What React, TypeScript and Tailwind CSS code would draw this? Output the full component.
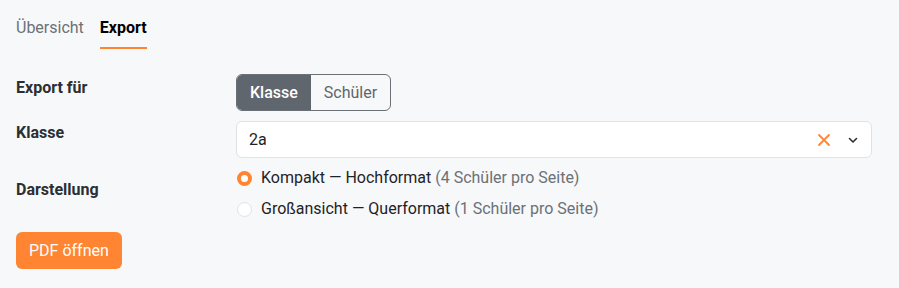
import { useState } from "react";

const fieldLabel = "text-[16px] leading-[20px] font-bold text-[#2b2f33]";

export default function App() {
  const [tab, setTab] = useState("export");
  const [target, setTarget] = useState("klasse");
  const [layout, setLayout] = useState("kompakt");

  return (
    <main className="min-h-screen bg-[#f7f8fa] px-4 font-['Roboto',sans-serif] text-[#2b2f33]">
      <div className="flex gap-4 pt-[14px]">
        <button
          onClick={() => setTab("overview")}
          className={`h-[35px] border-b-2 pb-[6px] text-[16px] ${tab === "overview" ? "border-[#ff8533] font-bold text-black" : "border-transparent text-[#6b7177]"}`}
        >
          Übersicht
        </button>
        <button
          onClick={() => setTab("export")}
          className={`h-[35px] border-b-2 pb-[6px] text-[16px] ${tab === "export" ? "border-[#ff8533] font-bold text-black" : "border-transparent text-[#6b7177]"}`}
        >
          Export
        </button>
      </div>

      <div className="mt-[25px] grid grid-cols-[220px_1fr] gap-y-[10px] pr-[11px]">
        <div className={`${fieldLabel} pt-[4px]`}>Export für</div>
        <div className="flex">
          <div className="flex h-[37px] overflow-hidden rounded-md border border-[#6b7177] text-[16px]">
            <button
              onClick={() => setTarget("klasse")}
              className={`px-[13px] ${target === "klasse" ? "bg-[#5f666e] font-medium text-white" : "text-[#5f666e]"}`}
            >
              Klasse
            </button>
            <button
              onClick={() => setTarget("schueler")}
              className={`px-[13px] ${target === "schueler" ? "bg-[#5f666e] font-medium text-white" : "text-[#5f666e]"}`}
            >
              Schüler
            </button>
          </div>
        </div>

        <div className={`${fieldLabel} pt-[2px]`}>Klasse</div>
        <div className="flex h-[37px] items-center rounded-md border border-[#dfe2e6] bg-white pl-[12px] pr-[12px] text-[16px] text-[#1f2327]">
          <span className="flex-1">2a</span>
          <svg width="14" height="14" viewBox="0 0 14 14" className="mr-[16px]">
            <path d="M2 2L12 12M12 2L2 12" stroke="#ff8533" strokeWidth="1.8" strokeLinecap="round" />
          </svg>
          <svg width="12" height="12" viewBox="0 0 12 12">
            <path d="M2.5 4.5L6 8L9.5 4.5" stroke="#2b2f33" strokeWidth="1.6" fill="none" strokeLinecap="round" strokeLinejoin="round" />
          </svg>
        </div>

        <div className={`${fieldLabel} pt-[12px]`}>Darstellung</div>
        <div className="flex flex-col gap-[11px] text-[16px]">
          {[
            { id: "kompakt", text: "Kompakt — Hochformat", note: "(4 Schüler pro Seite)" },
            { id: "gross", text: "Großansicht — Querformat", note: "(1 Schüler pro Seite)" },
          ].map((o) => (
            <label key={o.id} className="flex cursor-pointer items-center gap-[9px] leading-[20px]" onClick={() => setLayout(o.id)}>
              <span
                className={`ml-[1px] h-[15px] w-[15px] rounded-full ${layout === o.id ? "border-[4px] border-[#ff8533] bg-white" : "border border-[#dfe2e6] bg-white"}`}
              />
              <span className="text-[#1f2327]">
                {o.text} <span className="text-[#6b7177]">{o.note}</span>
              </span>
            </label>
          ))}
        </div>
      </div>

      <button className="mt-[13px] h-[37px] rounded-md bg-[#ff8533] px-[13px] text-[16px] text-white">
        PDF öffnen
      </button>
    </main>
  );
}
